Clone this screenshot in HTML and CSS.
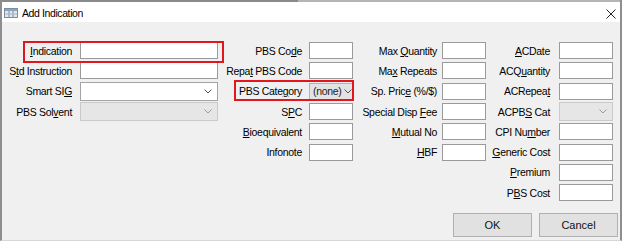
FILE: index.html
```html
<!DOCTYPE html>
<html lang="en">
<head>
    <meta charset="UTF-8">
    <meta name="viewport" content="width=device-width, initial-scale=1.0">
    <title>Add Indication</title>
    <link rel="stylesheet" href="styles.css">
</head>
<body>
    <div class="dialog">
        <div class="edge">
            <span class="edge-dark"></span>
            <span class="edge-light"></span>
        </div>
        <div class="titlebar">
            <svg class="app-icon" width="14" height="10" viewBox="0 0 14 10">
                <rect x="0.5" y="0.5" width="13" height="9" fill="#dfe6ee" stroke="#7d8da0"/>
                <rect x="1" y="1" width="12" height="2" fill="#8ea4bd"/>
                <line x1="5" y1="3" x2="5" y2="9.5" stroke="#7d8da0"/>
                <line x1="9" y1="3" x2="9" y2="9.5" stroke="#7d8da0"/>
                <line x1="1" y1="6" x2="13" y2="6" stroke="#a9b6c5"/>
            </svg>
            <span class="title">Add Indication</span>
            <svg class="close" width="10" height="10" viewBox="0 0 10 10">
                <path d="M0.5 0.5 L9.5 9.5 M9.5 0.5 L0.5 9.5" stroke="#222" stroke-width="1" fill="none"/>
            </svg>
        </div>

        <div class="body">
            <div class="form">
                <div class="col col1">
                    <label><u>I</u>ndication</label>
                    <input class="field" type="text">
                    <label>S<u>t</u>d Instruction</label>
                    <input class="field" type="text">
                    <label>Smart SI<u>G</u></label>
                    <div class="combo">
                        <span class="combo-text"></span>
                        <svg class="chev" width="8" height="5" viewBox="0 0 8 5"><path d="M0.5 0.5 L4 4 L7.5 0.5" stroke="#555" fill="none"/></svg>
                    </div>
                    <label>PBS Sol<u>v</u>ent</label>
                    <div class="combo disabled">
                        <span class="combo-text"></span>
                        <svg class="chev" width="8" height="5" viewBox="0 0 8 5"><path d="M0.5 0.5 L4 4 L7.5 0.5" stroke="#999" fill="none"/></svg>
                    </div>
                </div>

                <div class="col col2">
                    <label>PBS Co<u>d</u>e</label>
                    <input class="field" type="text">
                    <label>Repa<u>t</u> PBS Code</label>
                    <input class="field" type="text">
                    <label>PBS Cate<u>g</u>ory</label>
                    <div class="combo button-combo">
                        <span class="combo-text">(none)</span>
                        <svg class="chev" width="8" height="5" viewBox="0 0 8 5"><path d="M0.5 0.5 L4 4 L7.5 0.5" stroke="#555" fill="none"/></svg>
                    </div>
                    <label>S<u>P</u>C</label>
                    <input class="field" type="text">
                    <label><u>B</u>ioequivalent</label>
                    <input class="field" type="text">
                    <label>Infonote</label>
                    <input class="field" type="text">
                </div>

                <div class="col col3">
                    <label>Max <u>Q</u>uantity</label>
                    <input class="field" type="text">
                    <label>Ma<u>x</u> Repeats</label>
                    <input class="field" type="text">
                    <label>Sp. Pric<u>e</u> (%/$)</label>
                    <input class="field" type="text">
                    <label>Special Disp <u>F</u>ee</label>
                    <input class="field" type="text">
                    <label><u>M</u>utual No</label>
                    <input class="field" type="text">
                    <label><u>H</u>BF</label>
                    <input class="field" type="text">
                </div>

                <div class="col col4">
                    <label><u>A</u>CDate</label>
                    <input class="field" type="text">
                    <label>ACQ<u>u</u>antity</label>
                    <input class="field" type="text">
                    <label>ACRepea<u>t</u></label>
                    <input class="field" type="text">
                    <label>ACPB<u>S</u> Cat</label>
                    <div class="combo disabled">
                        <span class="combo-text"></span>
                        <svg class="chev" width="8" height="5" viewBox="0 0 8 5"><path d="M0.5 0.5 L4 4 L7.5 0.5" stroke="#999" fill="none"/></svg>
                    </div>
                    <label>CPI Nu<u>m</u>ber</label>
                    <input class="field" type="text">
                    <label><u>G</u>eneric Cost</label>
                    <input class="field" type="text">
                    <label><u>P</u>remium</label>
                    <input class="field" type="text">
                    <label>P<u>B</u>S Cost</label>
                    <input class="field" type="text">
                </div>
            </div>

            <div class="footer">
                <button class="btn">OK</button>
                <button class="btn">Cancel</button>
            </div>
        </div>

        <!-- annotation boxes drawn over the screenshot -->
        <div class="mark mark-indication"></div>
        <div class="mark mark-category"></div>
    </div>
</body>
</html>
```

FILE: styles.css
```css
body {
    margin: 0;
    background-color: #fff;
    font-family: "Liberation Sans", Arial, sans-serif;
    font-size: 10.5px;
    letter-spacing: -0.3px;
    color: #000;
}
.dialog {
    position: relative;
    width: 622px;
    height: 241px;
    box-sizing: border-box;
    background-color: #f0f0f0;
    border-left: 2px solid #8e8e8e;
    border-right: 2px solid #8e8e8e;
    border-bottom: 1px solid #d8d8d8;
    display: flex;
    flex-direction: column;
}
.edge {
    display: flex;
    height: 2px;
}
.edge-dark {
    width: 296px;
    background-color: #8a8a8a;
}
.edge-light {
    flex: 1;
    background-color: #b4b4b4;
}
.titlebar {
    height: 20px;
    background-color: #fff;
    display: flex;
    align-items: center;
    padding: 0 4px 0 2px;
}
.app-icon {
    margin-top: 2px;
}
.title {
    margin-left: 4px;
    margin-top: 1px;
    font-size: 10.5px;
    letter-spacing: -0.4px;
    color: #000;
}
.close {
    margin-left: auto;
    margin-top: 3px;
}
.body {
    flex: 1;
    display: flex;
    flex-direction: column;
    padding-top: 18px;
}
.form {
    display: flex;
    align-items: flex-start;
}
.col {
    display: grid;
    grid-auto-rows: 20.3px;
    align-items: center;
}
.col1 {
    grid-template-columns: 78px 138px;
}
.col2 {
    margin-left: 2px;
    grid-template-columns: 89px 44px;
}
.col3 {
    grid-template-columns: 89px 44px;
}
.col4 {
    grid-template-columns: 73px 54px;
}
label {
    text-align: right;
    white-space: nowrap;
    padding-top: 1px;
}
.col1 label {
    padding-right: 8px;
}
.col2 label {
    padding-right: 7px;
}
.col3 label {
    padding-right: 5px;
}
.col4 label {
    padding-right: 9px;
}
u {
    text-decoration-thickness: 1px;
    text-underline-offset: 1px;
}
.field {
    box-sizing: border-box;
    width: 100%;
    height: 17px;
    margin: 0;
    margin-top: 1px;
    padding: 0 2px;
    border: 1px solid #9a9a9a;
    background-color: #fff;
    font: inherit;
}
.combo {
    box-sizing: border-box;
    height: 19px;
    margin-top: 1px;
    display: flex;
    align-items: center;
    padding: 0 5px 0 3px;
    border: 1px solid #a4a4a4;
    background-color: #fff;
}
.combo.disabled {
    background-color: #e6e6e6;
    border-color: #cacaca;
}
.button-combo {
    height: 17px;
    padding: 0 4px 0 3px;
    background-color: #e3e3e3;
    border-color: #b4b4b4;
}
.combo-text {
    flex: 1;
    white-space: nowrap;
    color: #222;
}
.button-combo .combo-text {
    flex: none;
    margin-right: 2px;
}
.chev {
    margin-left: auto;
    flex: none;
}
.footer {
    display: flex;
    justify-content: flex-end;
    gap: 7px;
    padding-right: 2px;
    margin-top: 11px;
}
.btn {
    box-sizing: border-box;
    width: 79px;
    height: 24px;
    border: 1px solid #b0b0b0;
    background-color: #e1e1e1;
    font: inherit;
    font-size: 11px;
    color: #111;
}
.mark {
    position: absolute;
    box-sizing: border-box;
    border: 2px solid #e3161e;
}
.mark-indication {
    left: 21px;
    top: 41px;
    width: 201px;
    height: 22px;
}
.mark-category {
    left: 232px;
    top: 80px;
    width: 120px;
    height: 21px;
}
```
